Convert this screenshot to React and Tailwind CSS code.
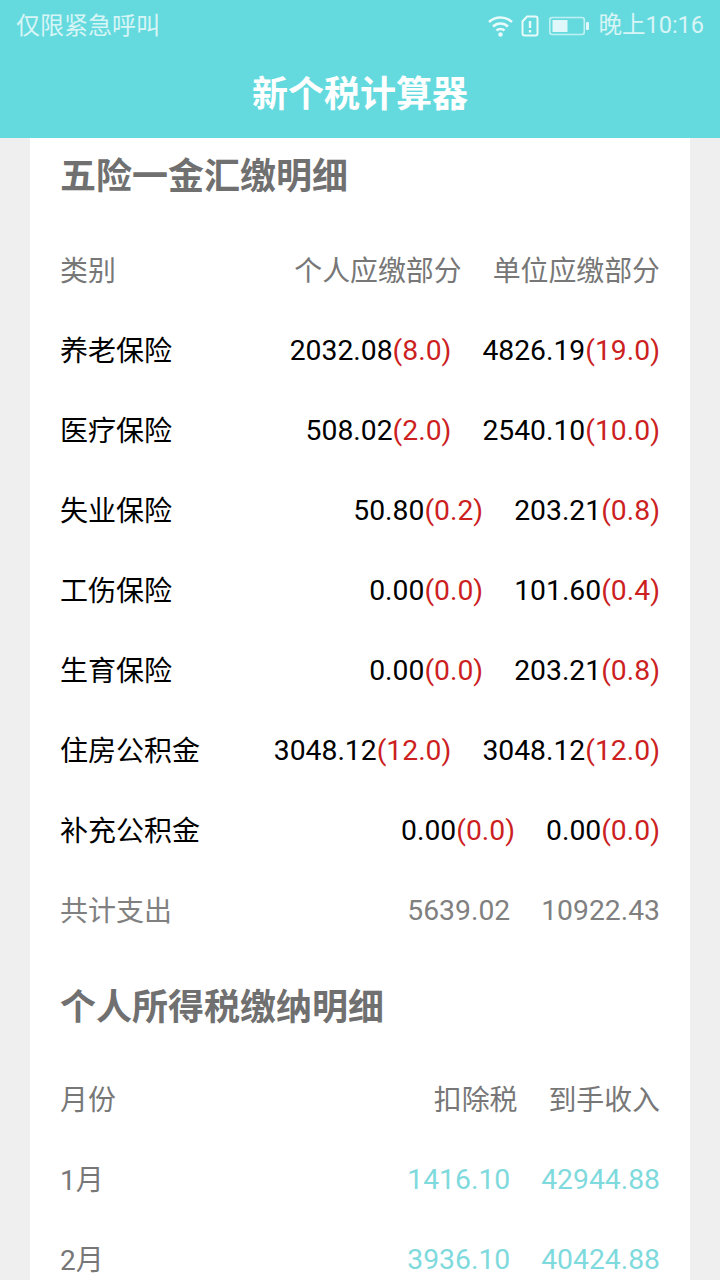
import React from "react";

function Row({ label, a, ap, b, bp }) {
  return (
    <div className="flex h-20 items-center text-[28.3px] text-black">
      <div className="flex-1 text-[28px]">{label}</div>
      <div className="mr-[31px] mb-[2px]"><span>{a}</span><span className="text-[#cc1f1f]">{ap}</span></div>
      <div className="mb-[2px]"><span>{b}</span><span className="text-[#cc1f1f]">{bp}</span></div>
    </div>
  );
}

export default function App() {
  const rows = [
    ["养老保险", "2032.08", "(8.0)", "4826.19", "(19.0)"],
    ["医疗保险", "508.02", "(2.0)", "2540.10", "(10.0)"],
    ["失业保险", "50.80", "(0.2)", "203.21", "(0.8)"],
    ["工伤保险", "0.00", "(0.0)", "101.60", "(0.4)"],
    ["生育保险", "0.00", "(0.0)", "203.21", "(0.8)"],
    ["住房公积金", "3048.12", "(12.0)", "3048.12", "(12.0)"],
    ["补充公积金", "0.00", "(0.0)", "0.00", "(0.0)"],
  ];
  return (
    <div className="h-[1280px] w-[720px] overflow-hidden bg-[#efefef] font-['Roboto','Noto_Sans_CJK_SC',sans-serif]">
      <div className="h-[138px] bg-[#65dade] text-white">
        <div className="flex h-[52px] items-center justify-between pl-4 pr-4 text-[24px] text-white/75">
          <span>仅限紧急呼叫</span>
          <div className="flex items-center">
            <svg className="mr-[7px]" width="27" height="24" viewBox="0 0 27 24" fill="none" stroke="white" strokeOpacity="0.85" strokeWidth="2.6"><path d="M2 8c6.500-6 16.500-6 23 0M6 12.500c4.200-4 10.800-4 15 0M9.500 16.500c2.200-2 5.800-2 8 0"/><circle cx="13.500" cy="20.500" r="2.200" fill="white" fillOpacity="0.85" stroke="none"/></svg>
            <svg className="mr-[10px]" width="18" height="22" viewBox="0 0 18 22" fill="none"><path d="M6 1.500h8.500a2 2 0 0 1 2 2v15a2 2 0 0 1-2 2h-11a2 2 0 0 1-2-2V6.500z" stroke="white" strokeOpacity="0.85" strokeWidth="2"/><path d="M9 6v7M9 15v2.500" stroke="white" strokeOpacity="0.85" strokeWidth="2.400"/></svg>
            <svg className="mr-[9px]" width="40" height="20" viewBox="0 0 40 20" fill="none"><rect x="0.800" y="1.500" width="34.500" height="17" rx="2.500" stroke="white" strokeOpacity="0.6" strokeWidth="1.600"/><rect x="3.500" y="4" width="15" height="12" fill="white" fillOpacity="0.8"/><rect x="37" y="6" width="3" height="8" rx="1" fill="white" fillOpacity="0.8"/></svg>
            <span className="text-[23.5px]">晚上10:16</span>
          </div>
        </div>
        <div className="flex h-[86px] items-center justify-center text-[36px] font-bold">新个税计算器</div>
      </div>
      <div className="mx-[30px] rounded-b-lg bg-white px-[30px]">
        <div className="flex h-[94px] items-center pb-[16px] text-[36px] font-bold text-[#707070]">五险一金汇缴明细</div>
        <div className="flex h-20 items-center text-[27.9px] text-[#777]">
          <div className="flex-1">类别</div>
          <div className="mr-[31px]">个人应缴部分</div>
          <div>单位应缴部分</div>
        </div>
        {rows.map((r) => <Row key={r[0]} label={r[0]} a={r[1]} ap={r[2]} b={r[3]} bp={r[4]} />)}
        <div className="flex h-20 items-center text-[28.3px] text-[#808080]">
          <div className="flex-1 text-[28px]">共计支出</div>
          <div className="mr-[31px] mb-[2px]">5639.02</div>
          <div className="mb-[2px]">10922.43</div>
        </div>
        <div className="flex h-[109px] items-center pt-[3px] text-[36px] font-bold text-[#707070]">个人所得税缴纳明细</div>
        <div className="flex h-20 items-center text-[27.9px] text-[#777]">
          <div className="flex-1">月份</div>
          <div className="mr-[31px]">扣除税</div>
          <div>到手收入</div>
        </div>
        <div className="flex h-20 items-center text-[28.3px]">
          <div className="flex-1 text-[28px] text-[#777]">1月</div>
          <div className="mr-[31px] mb-[2px] text-[#7fdadd]">1416.10</div>
          <div className="mb-[2px] text-[#7fdadd]">42944.88</div>
        </div>
        <div className="flex h-20 items-center text-[28.3px]">
          <div className="flex-1 text-[28px] text-[#777]">2月</div>
          <div className="mr-[31px] mb-[2px] text-[#7fdadd]">3936.10</div>
          <div className="mb-[2px] text-[#7fdadd]">40424.88</div>
        </div>
      </div>
    </div>
  );
}
